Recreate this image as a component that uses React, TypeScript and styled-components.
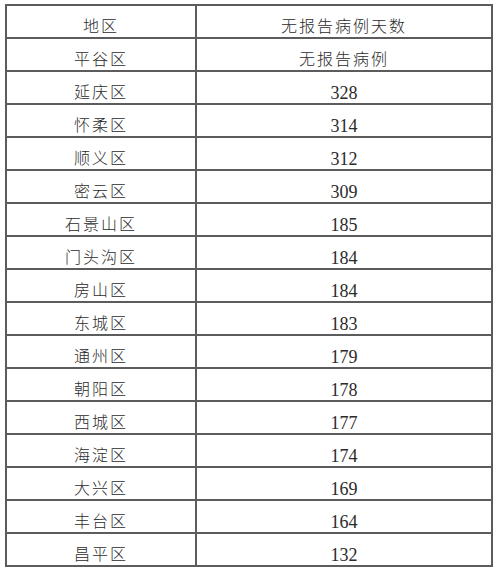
import React from "react";
import styled, { createGlobalStyle } from "styled-components";

const rows: Array<[string, string]> = [
  ["平谷区", "无报告病例"],
  ["延庆区", "328"],
  ["怀柔区", "314"],
  ["顺义区", "312"],
  ["密云区", "309"],
  ["石景山区", "185"],
  ["门头沟区", "184"],
  ["房山区", "184"],
  ["东城区", "183"],
  ["通州区", "179"],
  ["朝阳区", "178"],
  ["西城区", "177"],
  ["海淀区", "174"],
  ["大兴区", "169"],
  ["丰台区", "164"],
  ["昌平区", "132"],
];

const App: React.FC = () => {
  return (
    <Page>
      <GlobalStyle />
      <Table>
        <colgroup>
          <col style={{ width: 190 }} />
          <col />
        </colgroup>
        <tbody>
          <Row>
            <Cell>地区</Cell>
            <Cell>无报告病例天数</Cell>
          </Row>
          {rows.map(([area, days]) => (
            <Row key={area}>
              <Cell>{area}</Cell>
              <Cell $num={/^\d+$/.test(days)}>{days}</Cell>
            </Row>
          ))}
        </tbody>
      </Table>
    </Page>
  );
};

const GlobalStyle = createGlobalStyle`
  html, body {
    margin: 0;
    padding: 0;
    background: #ffffff;
  }
`;

const Page = styled.div`
  width: 500px;
  height: 571px;
  overflow: hidden;
  padding: 4px 0 0 5px;
  box-sizing: border-box;
  background: #fff;
`;

const Table = styled.table`
  width: 488px;
  border-collapse: collapse;
  table-layout: fixed;
  border: 2px solid #5c5c5c;
`;

const Row = styled.tr`
  height: 33px;
`;

const Cell = styled.td<{ $num?: boolean }>`
  border: 2px solid #5c5c5c;
  padding: ${(p) => (p.$num ? "11px 0 0" : "10px 0 0")};
  height: 33px;
  box-sizing: border-box;
  text-align: center;
  vertical-align: middle;
  color: #2b2b2b;
  font-family: ${(p) =>
    p.$num
      ? `"Liberation Serif", serif`
      : `"Liberation Serif", "Noto Sans CJK SC", serif`};
  font-size: ${(p) => (p.$num ? "18px" : "16px")};
  font-weight: 300;
  letter-spacing: ${(p) => (p.$num ? "0" : "2px")};
  line-height: 18px;
  white-space: nowrap;
`;

export default App;
